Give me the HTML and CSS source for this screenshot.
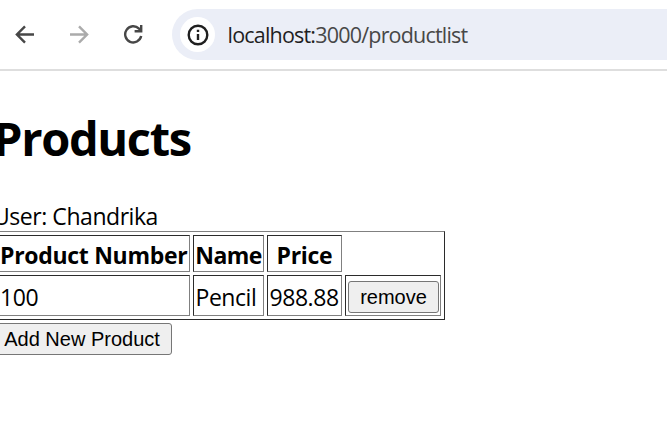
FILE: index.html
```html
<!DOCTYPE html>
<html lang="en">
<head>
<meta charset="utf-8">
<title>Products</title>
<link rel="stylesheet" href="styles.css">
</head>
<body>
<header class="toolbar">
  <svg class="icon back" viewBox="0 0 20 20"><path d="M19 10.5H2.3M10 2.4l-8.1 8.1 8.1 8.1"/></svg>
  <svg class="icon forward" viewBox="0 0 20 20"><path d="M1 10.5h16.7M10 2.4l8.1 8.1-8.1 8.1"/></svg>
  <svg class="icon reload" viewBox="0 0 20 20"><path d="M18.2 12.1A8.1 8.1 0 1 1 16 4.6l2 2M18.2 1v6.3h-6.6"/></svg>
  <div class="address">
    <span class="site-info">
      <svg class="info" viewBox="0 0 22 22"><circle cx="11" cy="11" r="9.3"/><path d="M11 10v6M11 5.8v2.2"/></svg>
    </span>
    <span class="url"><span class="host">localhost:</span>3000/productlist</span>
  </div>
</header>
<main class="page">
  <h1 class="title">Products</h1>
  <div class="user">User: Chandrika</div>
  <table class="products">
    <tr class="head"><th class="number">Product Number</th><th class="name">Name</th><th class="price">Price</th></tr>
    <tr class="row"><td class="id">100</td><td>Pencil</td><td>988.88</td><td class="action"><button class="button remove">remove</button></td></tr>
  </table>
  <button class="button add">Add New Product</button>
</main>
</body>
</html>
```
FILE: styles.css
```css
* { box-sizing: border-box; }
body {
  margin: 0;
  height: 423px;
  overflow: hidden;
  background: #fff;
  color: #000;
  font-family: "Open Sans", "Noto Sans", sans-serif;
  font-size: 23px;
  line-height: 32px;
}
.toolbar {
  display: flex;
  align-items: center;
  height: 71px;
  padding: 0 0 2px 15px;
  border-bottom: 2px solid #dedede;
}
.icon {
  flex: none;
  width: 20px;
  height: 20px;
  fill: none;
  stroke: #474747;
  stroke-width: 2.4;
}
.forward { margin-left: 34px; stroke: #ababab; }
.reload { margin-left: 34px; }
.address {
  display: flex;
  align-items: center;
  flex: 1;
  height: 51px;
  margin: 2px 0 0 29px;
  padding-left: 8px;
  border-radius: 26px 0 0 26px;
  background: #ebeef7;
}
.site-info {
  display: flex;
  align-items: center;
  justify-content: center;
  width: 35px;
  height: 35px;
  border-radius: 50%;
  background: #fff;
}
.info { width: 22px; height: 22px; fill: none; stroke: #1f1f1f; stroke-width: 2.4; }
.url { margin-left: 12.5px; font-size: 21.5px; letter-spacing: -0.8px; color: #474747; }
.host { color: #1f1f1f; }
.page { margin-left: -5px; }
.title {
  height: 64px;
  margin: 35px 0 30px -2px;
  font-size: 47px;
  line-height: 64px;
  letter-spacing: -1.35px;
}
.user { height: 31px; margin-left: -2px; letter-spacing: -0.45px; }
.products {
  width: 450px;
  height: 89px;
  table-layout: fixed;
  border: 1px solid;
  border-color: #808080 #2b2b2b #2b2b2b #808080;
  border-spacing: 3px;
}
.products th, .products td {
  padding: 0;
  border: 1px solid;
  border-color: #2b2b2b #808080 #808080 #2b2b2b;
  white-space: nowrap;
}
.products th { padding-top: 2px; letter-spacing: -0.3px; }
.products td { padding: 3px 0 0 1.5px; letter-spacing: -0.45px; }
.products .number { padding-right: 2px; }
.products .name { letter-spacing: -0.6px; }
.products .id { padding-left: 0; }
.head { height: 37px; }
.row { height: 41px; }
.number { width: 191px; }
.name { width: 71px; }
.price { width: 75px; }
.products .action { padding: 2px 0 0 2px; }
.button {
  display: block;
  height: 32px;
  padding: 0;
  border: 1px solid #767676;
  border-radius: 3px;
  background: #efefef;
  color: #000;
  font: 20px/30px "Liberation Sans", Arial, sans-serif;
}
.remove { width: 91px; }
.add { width: 177px; margin-top: 3px; padding-right: 3px; }
```
